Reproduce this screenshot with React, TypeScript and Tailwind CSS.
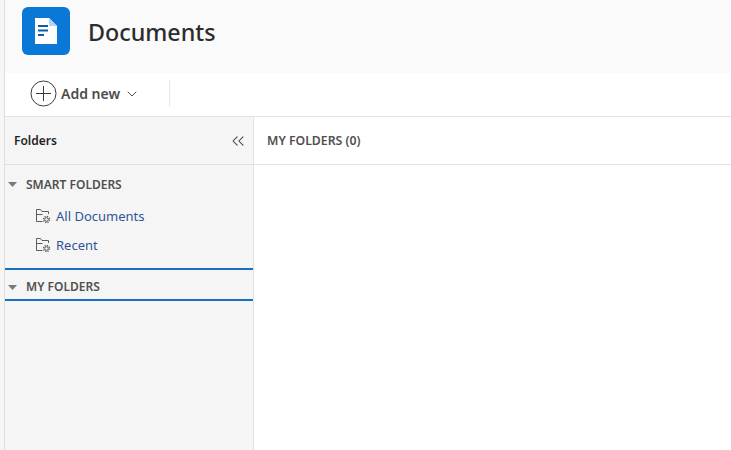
import React from 'react';
import { ChevronDown, ChevronsLeft } from 'lucide-react';

const FolderGearIcon = () => (
  <svg width="16" height="16" viewBox="0 0 16 16" fill="none" stroke="#5c5c5c" strokeWidth="1" className="shrink-0">
    <path d="M7.5 13.5H1.5V1.5H5.5L7 3.5H13.5V6" />
    <path d="M1.5 6.5H7.5" />
    <circle cx="11.5" cy="11.5" r="1.8" />
    <circle cx="11.5" cy="11.5" r="3" strokeDasharray="1.3 1.05" strokeWidth="1.3" />
  </svg>
);

const Caret = () => (
  <svg width="9" height="5" viewBox="0 0 9 5" className="shrink-0">
    <path d="M0 0H9L4.5 5Z" fill="#7a7a7a" />
  </svg>
);

const SmartFolder = ({ label }: { label: string }) => (
  <div className="flex h-[29px] items-center gap-[5px] pl-[30px]">
    <FolderGearIcon />
    <span className="pt-[3px] text-[13px] text-[#2f5596]">{label}</span>
  </div>
);

export default function App() {
  return (
    <div className="h-[450px] w-[731px] overflow-hidden border-l-[4px] border-l-[#f6f6f6] bg-white font-['Noto_Sans',sans-serif]">
      <div className="flex h-full flex-col border-l border-l-[#dedede]">
        <header className="flex h-[73px] shrink-0 items-center gap-[18px] bg-[#fafafa] pb-[11px] pl-[17px]">
          <div className="flex h-[48px] w-[48px] items-center justify-center rounded-[6px] bg-[#0a78d7]">
            <svg width="22" height="26" viewBox="0 0 22 26">
              <path d="M0 0H14L22 8V26H0Z" fill="#ffffff" />
              <path d="M14 0L22 8H14Z" fill="#b5d6f3" />
              <path d="M3 7H13V9H3ZM3 11.5H13V13.5H3ZM3 16H9V18H3Z" fill="#0a5ea8" />
            </svg>
          </div>
          <h1 className="mt-[3px] text-[23.3px] font-medium leading-none text-[#2c2c2c]">Documents</h1>
        </header>

        <div className="flex h-[44px] shrink-0 items-center border-b border-[#e1e1e1] pb-[2px] pl-[25px]">
          <div className="flex items-center gap-[4px] pr-[29px]">
            <svg width="27" height="27" viewBox="0 0 27 27" fill="none" stroke="#3a3a3a" strokeWidth="1">
              <circle cx="13.5" cy="13.5" r="12.5" />
              <path d="M13.5 6V21M6 13.5H21" />
            </svg>
            <span className="text-[14px] font-semibold text-[#4b4b4b]">Add new</span>
            <ChevronDown size={16} strokeWidth={1.5} className="text-[#4b4b4b]" />
          </div>
          <div className="h-[27px] w-px bg-[#e8e8e8]" />
        </div>

        <div className="flex min-h-0 flex-1">
          <aside className="flex w-[249px] shrink-0 flex-col border-r border-[#e1e1e1] bg-[#f5f5f5]">
            <div className="flex h-[48px] shrink-0 items-center justify-between border-b border-[#e1e1e1] pl-[9px] pr-[5px]">
              <span className="pt-px text-[12px] font-semibold text-[#1f1f1f]">Folders</span>
              <ChevronsLeft size={20} strokeWidth={1.25} className="text-[#3f3f3f]" />
            </div>
            <div className="flex h-[36px] items-center gap-[9px] pl-[3px] pt-[3px]">
              <Caret />
              <span className="text-[12px] font-semibold text-[#505050]">SMART FOLDERS</span>
            </div>
            <SmartFolder label="All Documents" />
            <SmartFolder label="Recent" />
            <div className="mt-[9px] flex h-[33px] items-center gap-[9px] border-y-2 border-[#1a6fc0] pl-[3px] pt-[5px]">
              <Caret />
              <span className="text-[12px] font-semibold text-[#505050]">MY FOLDERS</span>
            </div>
          </aside>
          <main className="flex-1">
            <div className="flex h-[48px] items-center border-b border-[#e1e1e1] pl-[13px] pt-[2px]">
              <span className="text-[12.25px] font-semibold text-[#505050]">MY FOLDERS (0)</span>
            </div>
          </main>
        </div>
      </div>
    </div>
  );
}
